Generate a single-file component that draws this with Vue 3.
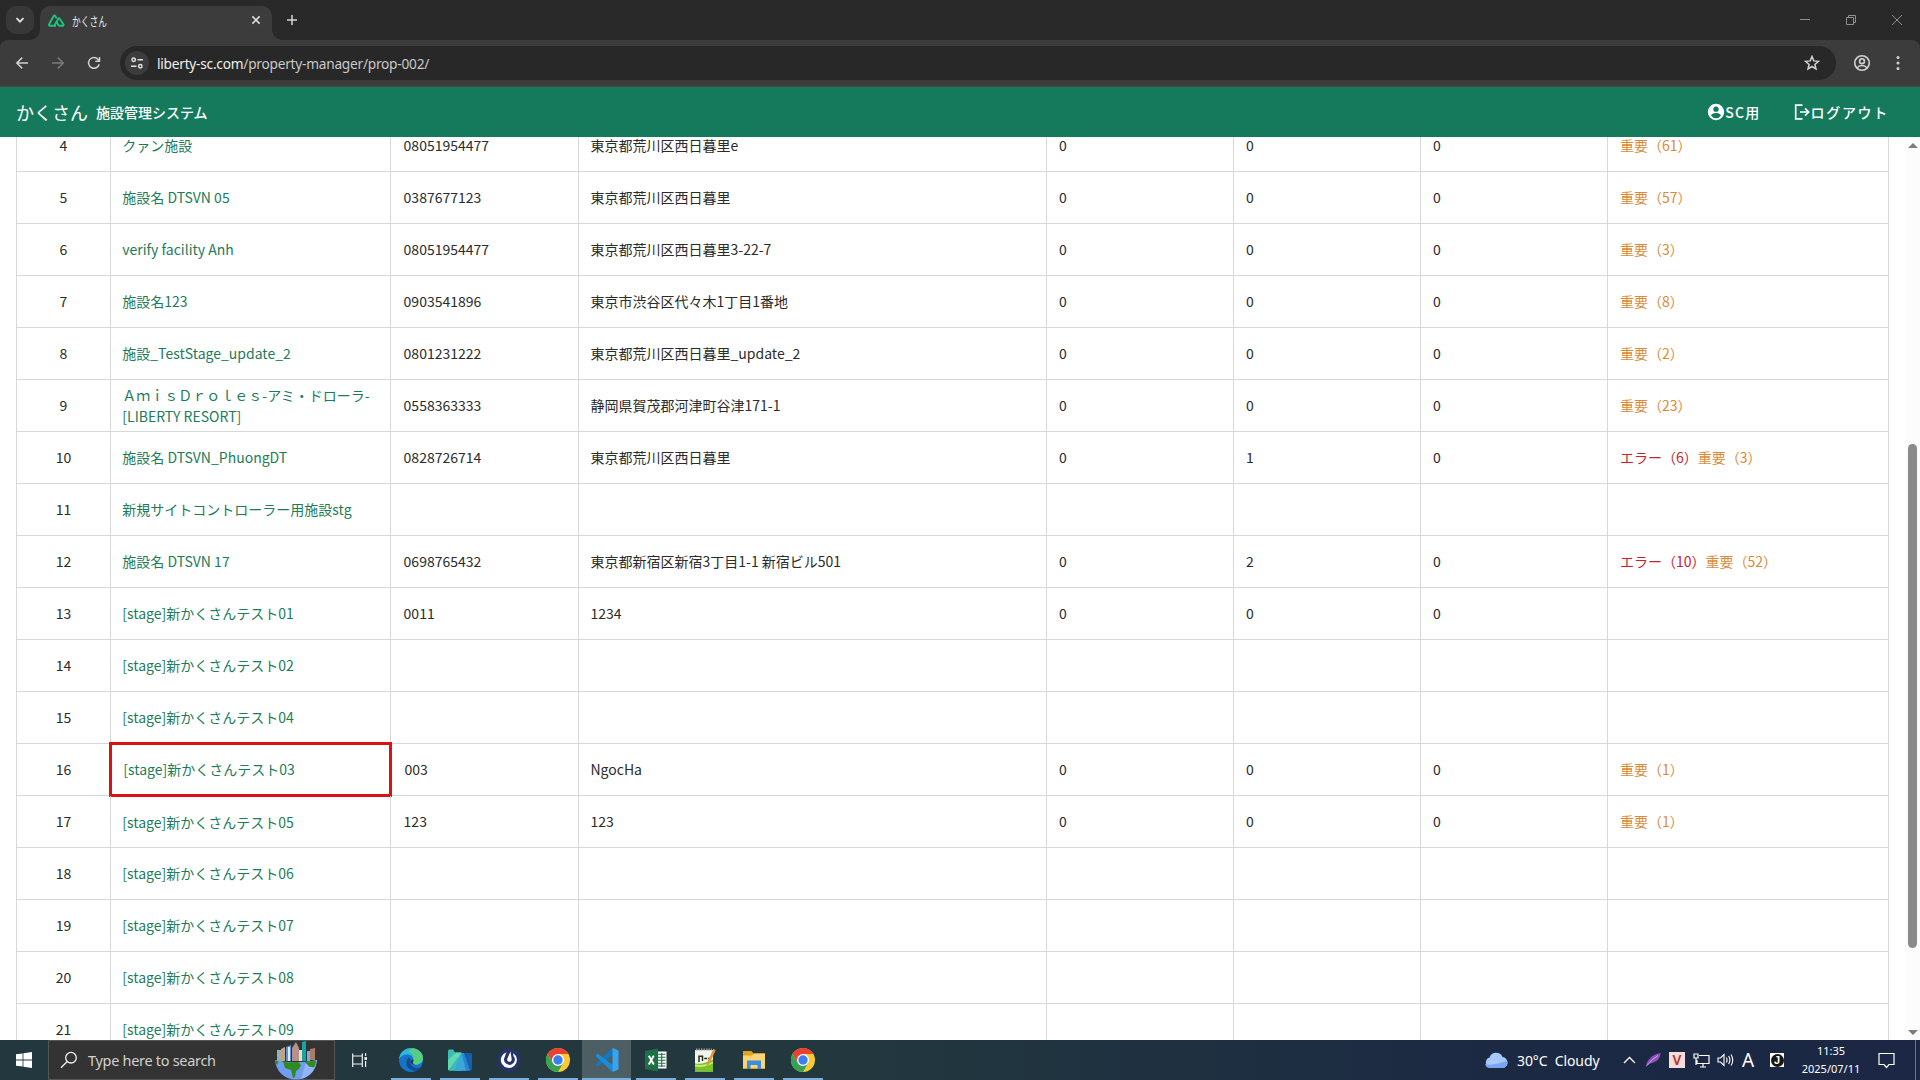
<script setup>
const rows = [
  { n: 4, name: ['クァン施設'], tel: '08051954477', addr: '東京都荒川区西日暮里e', c: [0, 0, 0], warn: 61 },
  { n: 5, name: ['施設名 DTSVN 05'], tel: '0387677123', addr: '東京都荒川区西日暮里', c: [0, 0, 0], warn: 57 },
  { n: 6, name: ['verify facility Anh'], tel: '08051954477', addr: '東京都荒川区西日暮里3-22-7', c: [0, 0, 0], warn: 3 },
  { n: 7, name: ['施設名123'], tel: '0903541896', addr: '東京市渋谷区代々木1丁目1番地', c: [0, 0, 0], warn: 8 },
  { n: 8, name: ['施設_TestStage_update_2'], tel: '0801231222', addr: '東京都荒川区西日暮里_update_2', c: [0, 0, 0], warn: 2 },
  { n: 9, name: ['ＡｍｉｓＤｒｏｌｅｓ-アミ・ドローラ-', '[LIBERTY RESORT]'], tel: '0558363333', addr: '静岡県賀茂郡河津町谷津171-1', c: [0, 0, 0], warn: 23 },
  { n: 10, name: ['施設名 DTSVN_PhuongDT'], tel: '0828726714', addr: '東京都荒川区西日暮里', c: [0, 1, 0], err: 6, warn: 3 },
  { n: 11, name: ['新規サイトコントローラー用施設stg'], c: ['', '', ''] },
  { n: 12, name: ['施設名 DTSVN 17'], tel: '0698765432', addr: '東京都新宿区新宿3丁目1-1 新宿ビル501', c: [0, 2, 0], err: 10, warn: 52 },
  { n: 13, name: ['[stage]新かくさんテスト01'], tel: '0011', addr: '1234', c: [0, 0, 0] },
  { n: 14, name: ['[stage]新かくさんテスト02'], c: ['', '', ''] },
  { n: 15, name: ['[stage]新かくさんテスト04'], c: ['', '', ''] },
  { n: 16, name: ['[stage]新かくさんテスト03'], tel: '003', addr: 'NgocHa', c: [0, 0, 0], warn: 1, marked: true },
  { n: 17, name: ['[stage]新かくさんテスト05'], tel: '123', addr: '123', c: [0, 0, 0], warn: 1 },
  { n: 18, name: ['[stage]新かくさんテスト06'], c: ['', '', ''] },
  { n: 19, name: ['[stage]新かくさんテスト07'], c: ['', '', ''] },
  { n: 20, name: ['[stage]新かくさんテスト08'], c: ['', '', ''] },
  { n: 21, name: ['[stage]新かくさんテスト09'], c: ['', '', ''] },
]
const apps = ['edge', 'azure', 'matter', 'chrome', 'code', 'excel', 'npp', 'folder', 'chrome']
</script>

<template>
  <div class="screen">
    <div class="tabs">
      <div class="tabsearch">
        <svg width="12" height="12" viewBox="0 0 12 12"><path d="M2.5 4.2L6 7.7l3.500-3.500" fill="none" stroke="#e3e3e3" stroke-width="1.800" /></svg>
      </div>
      <div class="tab">
        <svg class="nuxt" width="17" height="13" viewBox="0 0 17 13"><path d="M8 11.700H1.900c-.8 0-1.200-.7-.8-1.400L5.700 2c.4-.7 1.200-.7 1.600 0l1.300 2.400M8 11.700c-.9 0-1.300-.7-.9-1.400l3.200-5.600c.4-.7 1-.7 1.400 0l3.700 5.600c.4.700.1 1.400-.8 1.400h-3.100c-.8 0-1-.2-1.400-.9L8.600 7.500" fill="none" stroke="#18c77c" stroke-width="1.900" stroke-linejoin="round" /></svg>
        <span class="tabtitle">かくさん</span>
        <svg width="10" height="10" viewBox="0 0 10 10"><path d="M1.400 1.400l7.200 7.200M8.600 1.400L1.400 8.600" stroke="#e3e3e3" stroke-width="1.500" /></svg>
      </div>
      <svg class="plus" width="12" height="12" viewBox="0 0 12 12"><path d="M6 1v10M1 6h10" stroke="#d6d6d6" stroke-width="1.500" /></svg>
      <div class="winbtns">
        <svg width="12" height="12" viewBox="0 0 12 12"><path d="M1 5.500h10" stroke="#8e8e8e" /></svg>
        <svg width="12" height="12" viewBox="0 0 12 12"><path d="M1.500 3.500h7v7h-7zM3.500 3.500v-2h7v7h-2" fill="none" stroke="#8e8e8e" /></svg>
        <svg width="12" height="12" viewBox="0 0 12 12"><path d="M1 1l10 10M11 1L1 11" stroke="#8e8e8e" /></svg>
      </div>
    </div>
    <div class="toolbar">
      <svg class="nav" width="14" height="14" viewBox="0 0 14 14"><path d="M13 7H2M7.200 1.600L1.800 7l5.400 5.400" fill="none" stroke="#d0d0d0" stroke-width="1.500" /></svg>
      <svg class="nav" width="14" height="14" viewBox="0 0 14 14"><path d="M1 7h11M6.800 1.600L12.200 7l-5.400 5.400" fill="none" stroke="#7b7b7b" stroke-width="1.500" /></svg>
      <svg class="nav" width="14" height="14" viewBox="0 0 14 14"><path d="M12.200 8.200A5.400 5.400 0 1 1 11 3.300l1.300 1.500M12.500 1v4.200H8.300" fill="none" stroke="#d0d0d0" stroke-width="1.500" /></svg>
      <div class="omni">
        <div class="site">
          <svg width="14" height="14" viewBox="0 0 14 14"><g fill="none" stroke="#e3e3e3" stroke-width="1.500"><circle cx="3.700" cy="3.800" r="1.700" /><circle cx="10.300" cy="10.200" r="1.700" /><path d="M7.500 3.800H13M1 10.200h5.500" /></g></svg>
        </div>
        <span class="url"><b>liberty-sc.com</b>/property-manager/prop-002/</span>
        <svg class="star" width="16" height="16" viewBox="0 0 16 16"><path d="M8 1.500l1.800 4.400 4.700.4-3.600 3.100 1.100 4.600L8 11.500 4 14l1.100-4.600-3.600-3.100 4.700-.4z" fill="none" stroke="#d2d2d2" stroke-width="1.500" /></svg>
      </div>
      <svg class="user" width="18" height="18" viewBox="0 0 18 18"><g fill="none" stroke="#d2d2d2" stroke-width="1.600"><circle cx="9" cy="9" r="7.300" /><circle cx="9" cy="7.200" r="2.400" /><path d="M3.800 14c2.800-3.300 7.600-3.300 10.400 0" /></g></svg>
      <svg class="kebab" width="4" height="16" viewBox="0 0 4 16"><g fill="#d2d2d2"><circle cx="2" cy="2.500" r="1.500" /><circle cx="2" cy="8" r="1.500" /><circle cx="2" cy="13.500" r="1.500" /></g></svg>
    </div>

    <header class="appbar">
      <span class="brand">かくさん</span>
      <span class="sub">施設管理システム</span>
      <span class="act user-act">
        <svg width="18" height="18" viewBox="1 1 22 22"><path fill-rule="evenodd" d="M12 2A10 10 0 0 0 2 12a10 10 0 0 0 10 10 10 10 0 0 0 10-10A10 10 0 0 0 12 2m0 3.200a3.300 3.300 0 1 1 0 6.600 3.300 3.300 0 0 1 0-6.600m0 14.300a7 7 0 0 1-6-3.300c0-2 4-3.100 6-3.100s6 1.100 6 3.100a7 7 0 0 1-6 3.300" fill="#fff" /></svg>SC用
      </span>
      <span class="act out-act">
        <svg width="18" height="18" viewBox="0 0 18 18"><path d="M9.500 2.200H2.700v13.600h6.800M7 9h8M12 5.300L15.700 9 12 12.700" fill="none" stroke="#fff" stroke-width="1.700" /></svg>ログアウト
      </span>
    </header>

    <main class="page">
      <div class="grid">
        <div v-for="r in rows" :key="r.n" class="row" :class="{ marked: r.marked, lowered: r.n === 17 }">
          <div class="cell num">{{ r.n }}</div>
          <div class="cell name"><span v-for="l in r.name" :key="l">{{ l }}</span></div>
          <div class="cell tel">{{ r.tel }}</div>
          <div class="cell addr">{{ r.addr }}</div>
          <div v-for="(v, i) in r.c" :key="i" class="cell">{{ v }}</div>
          <div class="cell alerts">
            <span v-if="r.err" class="err">エラー（{{ r.err }}）</span><span v-if="r.warn" class="warn">重要（{{ r.warn }}）</span>
          </div>
        </div>
      </div>
      <div class="scroll">
        <i class="up"></i><i class="thumb"></i><i class="down"></i>
      </div>
    </main>

    <footer class="taskbar">
      <div class="start">
        <svg width="16" height="16" viewBox="0 0 16 16"><path d="M0 2.300l6.600-.9v6.200H0zM7.400 1.300L16 0v7.600H7.400zM0 8.400h6.600v6.200L0 13.700zM7.400 8.400H16V16l-8.600-1.200z" fill="#fff" /></svg>
      </div>
      <div class="search">
        <svg width="18" height="18" viewBox="0 0 18 18"><g fill="none" stroke="#f0f0f0" stroke-width="1.300"><circle cx="11" cy="6.700" r="5.300" /><path d="M7.200 10.500L1 16.800" /></g></svg>
        <span>Type here to search</span>
        <svg class="globe" width="44" height="39" viewBox="0 0 44 39">
          <path d="M3 9h4v12H3z" fill="#9dafa9" /><path d="M7 8l4-2v14H7z" fill="#c9a07c" /><path d="M12 6l5-2v16h-5z" fill="#4f93dc" /><path d="M14 6h2v14h-2z" fill="#dfe9f2" />
          <path d="M18 7l4-6 3 6v13h-7z" fill="#b98f8b" /><path d="M25 9h3v11h-3z" fill="#ece0c0" /><path d="M28 1l4-1v20h-4z" fill="#14a5a5" /><path d="M33 10h3v10h-3z" fill="#78b1d5" /><path d="M36 8l5-1v12h-5z" fill="#ac7b67" />
          <path d="M1 19c1 12 10 19.500 21 19.500S42 31 43 19c-12 3-30 3-42 0z" fill="#6f9df0" /><path d="M27 38c9-2 15-9 16-19l-11 2z" fill="#a9c4ff" opacity=".6" />
          <path d="M9 20.500c5 1 10 1 15 .5l3 3-2 4-3 2-1 6-2 1-2-8-6-2zM31 21l11-1.500c0 3-1 5-2 7l-5-1zM1.500 20l3 .5-1 3-1.500-.5z" fill="#2f8b20" />
        </svg>
      </div>
      <div class="taskview">
        <svg width="16" height="16" viewBox="0 0 16 16"><path d="M.7 1.500v2.500h9.600V1.500M.7 4v8h9.600V4M.7 15v-3M10.300 15v-3M13.600 1v3M13.600 9v6" fill="none" stroke="#f2f2f2" stroke-width="1.200" /><path d="M12.400 5.200h2.600v2.600h-2.600z" fill="#fff" /></svg>
      </div>
      <div v-for="(a, i) in apps" :key="i" class="app" :class="a">
        <svg v-if="a === 'edge'" width="24" height="24" viewBox="0 0 24 24">
          <circle cx="12" cy="12" r="12" fill="#1674c8" />
          <path d="M0 11C1 4 6 0 12 0c7 0 12 5 12 10 0 4-3 6.500-6.500 6.500-3 0-4.500-1.500-3.500-3.300C15 9 12 6.500 8 6.500 4.500 6.500 1.500 8.500 0 11z" fill="#2fb8d8" />
          <path d="M14 .2C20 1 24 5 24 10c0 4-3 6.500-6.500 6.500-3 0-4.500-1.500-3.500-3.300 2-5-1-9-5-10z" fill="#5fd070" opacity=".85" />
          <path d="M9.500 10c-4 4-2 10 3 12 4 1.500 8 .5 10-3-3 1.500-7 1.300-9.500-1-2-1.800-2.500-4-1.500-6.500 0-1.500-1-2-2-1.500z" fill="#134a90" />
          <path d="M13.200 11.500c1.500 0 2 1 1 2-.8 1.500 0 2.600 1.500 3-2.500.3-4.200-1.300-4.200-3 0-1 .7-2 1.700-2z" fill="#20394a" />
        </svg>
        <svg v-else-if="a === 'azure'" width="26" height="24" viewBox="0 0 26 24">
          <path d="M12 5h11.500c1 0 1.500.8 1.500 1.600V21c0 1-.8 1.800-1.800 1.800H12z" fill="#1261ad" /><path d="M13 5h4l6 17.800h-5z" fill="#2d83cf" />
          <path d="M1 3c0-1 .7-1.600 1.600-1.600h3.600L8 4.500h6.500v18.300H2.800c-1 0-1.800-.8-1.800-1.800z" fill="#3bbdb2" /><path d="M14.500 4.500L19 22.800H7z" fill="#3aa6dc" /><path d="M1 12l8-7.500h5.500L1.500 22.300 1 21z" fill="#6fe0b4" opacity=".75" />
        </svg>
        <svg v-else-if="a === 'matter'" width="24" height="24" viewBox="0 0 24 24">
          <circle cx="12" cy="12" r="11.500" fill="#26346b" /><path d="M9.500 4.300A8 8 0 1 0 16.200 5.200l.2 2.700A5.300 5.300 0 1 1 7.700 9z" fill="#fff" /><path d="M13.500 3.500l1.200 7.700a2.300 2.300 0 1 1-4.200-1z" fill="#fff" />
        </svg>
        <svg v-else-if="a === 'chrome'" width="24" height="24" viewBox="0 0 24 24">
          <circle cx="12" cy="12" r="12" fill="#fcc934" /><path d="M1.600 6A12 12 0 0 1 22.400 6H12l-5.200 9z" fill="#e94235" /><path d="M1.600 6A12 12 0 0 0 12 24l5.200-9L6.800 15z" fill="#34a353" /><circle cx="12" cy="12" r="6" fill="#fff" /><circle cx="12" cy="12" r="4.700" fill="#3c7df0" />
        </svg>
        <svg v-else-if="a === 'code'" width="24" height="24" viewBox="0 0 24 24">
          <path d="M17.500 0L1 15.500v1.800l1.600 1.200L18 6.800z" fill="#1179c2" /><path d="M17.500 24L1 8.500V6.700l1.600-1.200L18 17.200z" fill="#1b8bd6" /><path d="M17.500 0L23.500 2.500v19L17.500 24z" fill="#35a5ee" />
        </svg>
        <svg v-else-if="a === 'excel'" width="24" height="24" viewBox="0 0 24 24">
          <path d="M12 3.500h10.500v17H12z" fill="#fff" /><path d="M13 6.200h8.500M13 9.200h8.500M13 12.200h8.500M13 15.200h8.500M13 18h8.500M17.700 5v14" stroke="#1f7145" stroke-width="1.100" /><path d="M1 3l13-2.500v23L1 21z" fill="#1c7044" /><path d="M4.800 7.800l5 8.700M9.800 7.600L4.800 16.500" stroke="#fff" stroke-width="1.900" />
        </svg>
        <svg v-else-if="a === 'npp'" width="24" height="24" viewBox="0 0 24 24">
          <path d="M2 2h18v21.500H2z" fill="#f3f5ea" /><path d="M2 15.500c6 1 12-1 18-4v12H2z" fill="#7ac325" /><path d="M2 18.500c6 1 12 0 18-3v-2c-6 3-12 4-18 3z" fill="#c7e87a" /><path d="M3 1.500h16" stroke="#8f979b" stroke-width="2" stroke-dasharray="1.500 1" /><path d="M6 14V7.500M6 8.200h3.500V13M11.200 10.500h3M15.200 10.500h2" stroke="#26301c" stroke-width="1.500" fill="none" /><path d="M20.500 .8l2.200 1.500L16 16.500l-2.400 1.500.3-3z" fill="#e4953a" />
        </svg>
        <svg v-else width="24" height="24" viewBox="0 0 24 24">
          <path d="M1 3h8.500l2 2.500H23V21H1z" fill="#dfa31c" /><path d="M1 7.500h9l2-2H23V20H1z" fill="#fad573" /><path d="M5 12.500h14v8.500h-3.500v-4h-7v4H5z" fill="#3b8ede" />
        </svg>
      </div>
      <div class="tray">
        <svg class="cloud" width="25" height="17" viewBox="0 0 25 17"><path d="M6 16a5.500 5.500 0 0 1-.5-10.500A7 7 0 0 1 18.500 5 5.600 5.600 0 0 1 19 16z" fill="#a6c8fa" /><path d="M1 12c6 2 15-1 22.500-3a5.500 5.500 0 0 1-4.500 7H6c-2.500 0-4-1-5-4z" fill="#7aa6ee" /></svg>
        <span class="wx">30°C&nbsp; Cloudy</span>
        <svg class="t1" width="13" height="8" viewBox="0 0 13 8"><path d="M1 7l5.500-5.500L12 7" fill="none" stroke="#fff" stroke-width="1.300" /></svg>
        <svg class="t2" width="16" height="16" viewBox="0 0 16 16"><path d="M1 15C1.500 8 7 2.500 15.500 1c0 5.500-4 9.500-11 10.500z" fill="#8d50be" /><path d="M2 13.500Q7 7 13 3.500" fill="none" stroke="#d5a5ef" /></svg>
        <span class="vkey">V</span>
        <svg class="t3" width="17" height="15" viewBox="0 0 17 15"><path d="M6 2.500h10v8H4V7M10 11v3M7 14h6M1 1h4v4H1zM3 5v7" fill="none" stroke="#fff" stroke-width="1.200" /></svg>
        <svg class="t4" width="17" height="14" viewBox="0 0 17 14"><path d="M1 5h2.500L7 1.500v11L3.500 9H1zM9.300 4.500q1.500 2.500 0 5M11.600 3q2.600 4 0 8M14 1.500q3.500 5.500 0 11" fill="none" stroke="#fff" stroke-width="1.100" /></svg>
        <span class="ime">A</span>
        <span class="jbox"><i>J</i></span>
        <div class="clock"><span>11:35</span><span>2025/07/11</span></div>
        <svg class="note" width="17" height="17" viewBox="0 0 17 17"><path d="M1 1.500h15v11h-5L8.500 15.500 6 12.500H1z" fill="none" stroke="#fff" stroke-width="1.200" /></svg>
        <i class="peek"></i>
      </div>
    </footer>
  </div>
</template>

<style>
body { background: #fff; overflow: hidden; }
</style>

<style scoped>
*, *::before, *::after { box-sizing: border-box; }
svg { display: block; flex: none; }
.screen { width: 1920px; height: 1080px; display: flex; flex-direction: column; overflow: hidden; font-family: "Noto Sans CJK JP", sans-serif; font-size: 14px; }
.tabs { height: 40px; flex: none; background: #292929; display: flex; align-items: center; position: relative; z-index: 1; }
.tabsearch { width: 28px; height: 28px; margin-left: 6px; border-radius: 10px; background: #383838; display: flex; align-items: center; justify-content: center; }
.tab { position: relative; width: 232px; height: 34px; margin: 6px 0 0 6px; padding: 0 11px 6px 8px; border-radius: 10px 10px 0 0; background: #3c3c3c; display: flex; align-items: center; }
.tab::before, .tab::after { content: ""; position: absolute; bottom: 0; width: 10px; height: 10px; }
.tab::before { left: -10px; background: radial-gradient(circle at 0 0, transparent 9.500px, #3c3c3c 10px); }
.tab::after { right: -10px; background: radial-gradient(circle at 100% 0, transparent 9.500px, #3c3c3c 10px); }
.tabtitle { flex: 1; margin-left: 7px; color: #e8e8e8; font-size: 13px; transform: scaleX(0.67); transform-origin: left; }
.plus { margin-left: 14px; }
.winbtns { margin-left: auto; display: flex; gap: 34px; padding-right: 17px; }
.toolbar { height: 47px; flex: none; background: #3c3c3c; border-bottom: 1px solid #474747; display: flex; align-items: center; padding-left: 15px; border-radius: 8px 8px 0 0; box-shadow: 0 -10px 0 #292929; position: relative; z-index: 0; }
.nav { margin-right: 22px; }
.omni { width: 1716px; height: 34px; margin-left: -3px; border-radius: 17px; background: #282828; display: flex; align-items: center; padding: 0 16px 0 5px; }
.site { width: 24px; height: 24px; border-radius: 50%; background: #3c3c3c; display: flex; align-items: center; justify-content: center; }
.url { margin-left: 8px; flex: 1; font-family: "Noto Sans", sans-serif; font-size: 13.700px; letter-spacing: -0.240px; color: #c9c9c9; }
.url b { font-weight: 400; color: #eee; }
.user { margin-left: 17px; }
.kebab { margin-left: 25px; }
.appbar { height: 50px; flex: none; background: #147a5b; color: #fff; display: flex; align-items: center; padding: 0 31px 0 16px; font-weight: 500; }
.brand { font-size: 18px; font-weight: 400; }
.sub { margin-left: 8px; }
.act { display: flex; align-items: center; letter-spacing: 1.250px; }
.user-act { margin-left: auto; margin-right: 32px; }
.out-act { letter-spacing: 1.700px; }
.page { flex: 1; min-height: 0; overflow: hidden; display: flex; justify-content: space-between; }
.grid { width: 1873px; margin-left: 16px; margin-top: -17px; border-left: 1px solid #d8d8d8; }
.row { height: 52px; display: grid; grid-template-columns: 94px 280px 188px 468px 187px 187px 187px 281px; border-bottom: 1px solid #d8d8d8; position: relative; color: #2b2b2b; }
.cell { border-right: 1px solid #d8d8d8; padding-left: 12px; display: flex; align-items: center; white-space: nowrap; line-height: 21px; }
.num { padding: 0 0 0 0; justify-content: center; }
.cell.name { flex-direction: column; align-items: flex-start; justify-content: center; color: #1c7c5a; padding-left: 11.300px; }
.cell.tel { padding-left: 12.600px; }
.cell.addr { padding-left: 11.500px; }
.marked .name::after { content: ""; position: absolute; left: 92px; top: -2px; width: 283px; height: 55px; border: 3px solid #e01010; }
.marked .cell.name { padding-left: 12.300px; }
.marked .cell.tel { padding-left: 13.400px; }
.lowered .name { padding-top: 1px; }
.err { color: #c9202f; }
.warn { color: #db8b38; }
.scroll { width: 15px; background: #fcfcfc; display: flex; flex-direction: column; align-items: center; }
.up, .down { width: 0; height: 0; border: 5px solid transparent; }
.up { border-top: 0; border-bottom: 5px solid #7c7c7c; margin-top: 6px; }
.thumb { width: 9px; height: 504px; margin-top: 296px; border-radius: 5px; background: #8a8a8a; }
.down { border-bottom: 0; border-top: 5px solid #7c7c7c; margin-top: auto; margin-bottom: 5px; }
.taskbar { height: 40px; flex: none; display: flex; background: linear-gradient(90deg, #22373e 0, #22373e 45%, #1b2943 78%, #1b2744 100%); color: #fff; font-family: "Noto Sans", sans-serif; }
.start { width: 48px; display: flex; align-items: center; justify-content: center; }
.search { width: 287px; background: #333; border: 1px solid #565656; display: flex; align-items: center; padding-left: 11px; font-size: 14.500px; letter-spacing: -0.300px; color: #d0d0d0; }
.search span { margin-left: 10px; flex: 1; }
.globe { margin-right: 16px; }
.taskview { width: 51px; display: flex; align-items: center; padding-left: 17px; }
.app { width: 49px; display: flex; align-items: center; justify-content: center; position: relative; }
.app::after { content: ""; position: absolute; left: 5px; right: 4px; bottom: 0; height: 2px; background: #76afe0; }
.code { background: #4d5f65; }
.app.code::after { left: 0; right: 0; }
.tray { margin-left: auto; display: flex; align-items: center; }
.wx { margin-left: 8px; font-size: 14px; letter-spacing: -0.080px; width: 106px; white-space: nowrap; }
.t2 { margin-left: 9px; }
.vkey { margin-left: 8px; width: 16px; height: 16px; background: #f6dcda; color: #b2342c; font-weight: 600; font-size: 14px; line-height: 16px; text-align: center; }
.t3 { margin-left: 8px; }
.t4 { margin-left: 7px; }
.ime { margin-left: 8px; font-size: 19px; width: 13px; }
.jbox { margin-left: 15px; width: 14px; height: 14px; background: #fff; display: flex; align-items: center; justify-content: center; }
.jbox i { width: 13px; height: 13px; border-radius: 50%; background: #151515; font-family: "Liberation Sans", sans-serif; font-style: normal; font-size: 11px; line-height: 13px; text-align: center; font-weight: 700; }
.clock { width: 60px; margin-left: 17px; display: flex; flex-direction: column; align-items: center; font-size: 11px; line-height: 18px; }
.note { margin-left: 17px; margin-right: 20px; }
.peek { width: 1px; height: 40px; margin-right: 4px; background: #6c7586; }
</style>
